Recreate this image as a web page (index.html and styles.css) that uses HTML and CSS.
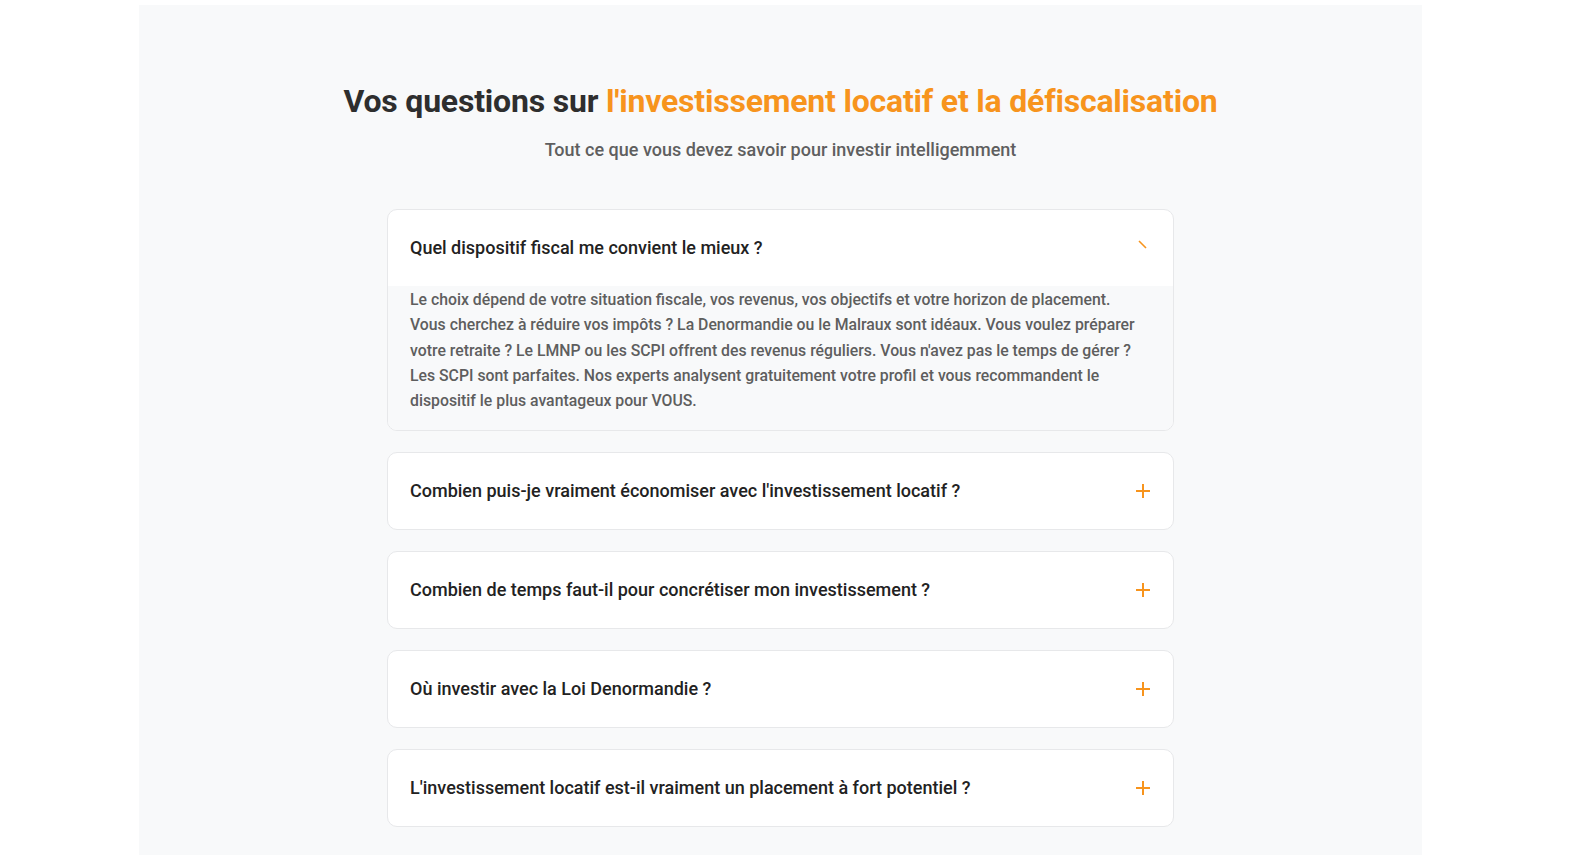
FILE: index.html
```html
<!DOCTYPE html>
<html lang="fr">
<head>
<meta charset="utf-8">
<title>FAQ</title>
<link rel="stylesheet" href="styles.css">
</head>
<body>
<section class="faq">
  <h2 class="faq-title">Vos questions sur <span class="accent">l'investissement locatif et la défiscalisation</span></h2>
  <p class="faq-sub">Tout ce que vous devez savoir pour investir intelligemment</p>
  <div class="faq-list">
    <div class="item open">
      <div class="q">
        <span>Quel dispositif fiscal me convient le mieux ?</span>
        <svg class="icon" width="16" height="16" viewBox="0 0 16 16"><line x1="4" y1="4" x2="11" y2="11" stroke="#f7941d" stroke-width="1.6" stroke-linecap="butt"/></svg>
      </div>
      <div class="a">Le choix dépend de votre situation fiscale, vos revenus, vos objectifs et votre horizon de placement. Vous cherchez à réduire vos impôts ? La Denormandie ou le Malraux sont idéaux. Vous voulez préparer votre retraite ? Le LMNP ou les SCPI offrent des revenus réguliers. Vous n'avez pas le temps de gérer ? Les SCPI sont parfaites. Nos experts analysent gratuitement votre profil et vous recommandent le dispositif le plus avantageux pour VOUS.</div>
    </div>
    <div class="item">
      <div class="q">
        <span>Combien puis-je vraiment économiser avec l'investissement locatif ?</span>
        <svg class="icon" width="16" height="16" viewBox="0 0 16 16"><path d="M1 8H15M8 1V15" stroke="#f7941d" stroke-width="2" fill="none"/></svg>
      </div>
    </div>
    <div class="item">
      <div class="q">
        <span>Combien de temps faut-il pour concrétiser mon investissement ?</span>
        <svg class="icon" width="16" height="16" viewBox="0 0 16 16"><path d="M1 8H15M8 1V15" stroke="#f7941d" stroke-width="2" fill="none"/></svg>
      </div>
    </div>
    <div class="item">
      <div class="q">
        <span>Où investir avec la Loi Denormandie ?</span>
        <svg class="icon" width="16" height="16" viewBox="0 0 16 16"><path d="M1 8H15M8 1V15" stroke="#f7941d" stroke-width="2" fill="none"/></svg>
      </div>
    </div>
    <div class="item">
      <div class="q">
        <span>L'investissement locatif est-il vraiment un placement à fort potentiel ?</span>
        <svg class="icon" width="16" height="16" viewBox="0 0 16 16"><path d="M1 8H15M8 1V15" stroke="#f7941d" stroke-width="2" fill="none"/></svg>
      </div>
    </div>
  </div>
</section>
</body>
</html>
```
FILE: styles.css
```css
* { box-sizing: border-box; }
html, body { margin: 0; background: #ffffff; }
body {
  padding: 5px 0 0 139px;
  font-family: Roboto, "Liberation Sans", sans-serif;
  overflow: hidden;
}
.faq {
  width: 1283px;
  min-height: 850px;
  background: #f8f9fa;
  padding: 77px 0 40px;
  display: flex;
  flex-direction: column;
  align-items: center;
}
.faq-title {
  margin: 0;
  font-size: 32px;
  line-height: 38px;
  font-weight: 700;
  color: #2e2e2e;
  text-align: center;
  letter-spacing: -0.2px;
}
.accent { color: #f7941d; }
.faq-sub {
  margin: 16px 0 0;
  font-size: 18px;
  line-height: 27px;
  font-weight: 500;
  color: #5f5f5f;
  text-align: center;
}
.faq-list {
  margin-top: 46px;
  width: 787px;
  display: flex;
  flex-direction: column;
  gap: 21px;
}
.item {
  background: #ffffff;
  border: 1px solid #e7e8ea;
  border-radius: 10px;
  overflow: hidden;
}
.q {
  height: 76px;
  padding: 0 22px 1px 22px;
  display: flex;
  align-items: center;
  justify-content: space-between;
  font-size: 18px;
  font-weight: 500;
  color: #222222;
}
.item.open .q { padding-bottom: 2px; }
.icon { flex: none; }
.item.open .icon { margin-top: -4px; }
.a {
  background: #f8f9fa;
  padding: 1px 31px 17px 22px;
  font-size: 15.8px;
  line-height: 25.25px;
  font-weight: 500;
  color: #5e5e5e;
}
```
